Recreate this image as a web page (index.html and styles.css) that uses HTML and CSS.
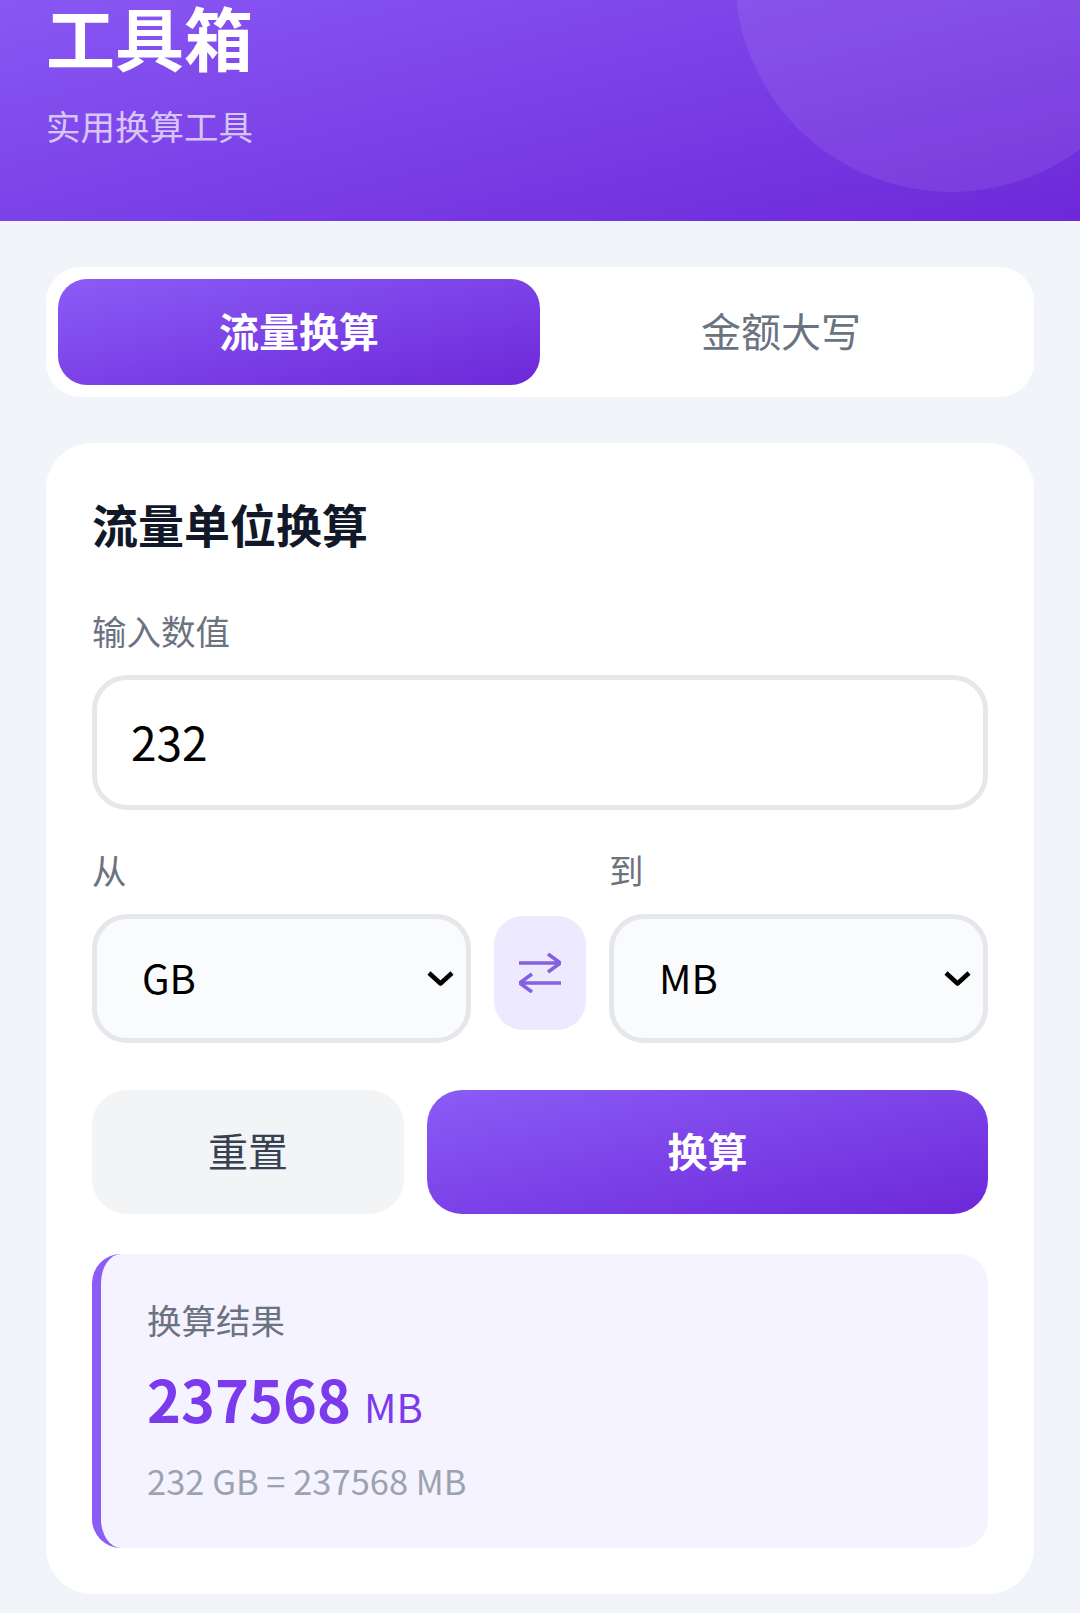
FILE: index.html
```html
<!DOCTYPE html>
<html lang="zh-CN">
<head>
    <meta charset="UTF-8">
    <meta name="viewport" content="width=device-width, initial-scale=1.0">
    <title>工具箱</title>
    <link rel="stylesheet" href="styles.css">
</head>
<body>
    <header class="hero">
        <div class="hero-circle"></div>
        <h1>工具箱</h1>
        <p>实用换算工具</p>
    </header>

    <main>
        <div class="tabs">
            <button class="tab active">流量换算</button>
            <button class="tab">金额大写</button>
        </div>

        <section class="card">
            <h2 class="card-title">流量单位换算</h2>

            <label class="field-label label-value" for="value">输入数值</label>
            <input class="value-input" id="value" type="text" value="232">

            <div class="unit-row">
                <div class="unit-col">
                    <label class="field-label" for="from">从</label>
                    <div class="select-wrap">
                        <select class="unit-select" id="from">
                            <option>GB</option>
                            <option>MB</option>
                        </select>
                        <svg class="chevron" viewBox="0 0 27 15"><path d="M2 2 13.500 12.500 25 2"/></svg>
                    </div>
                </div>
                <button class="swap" aria-label="交换">
                    <svg viewBox="0 0 42 40"><path d="M0 10H41M29 1 41.500 10 29 19M42 30H1M13 21 .5 30 13 39"/></svg>
                </button>
                <div class="unit-col">
                    <label class="field-label" for="to">到</label>
                    <div class="select-wrap">
                        <select class="unit-select" id="to">
                            <option>MB</option>
                            <option>GB</option>
                        </select>
                        <svg class="chevron" viewBox="0 0 27 15"><path d="M2 2 13.500 12.500 25 2"/></svg>
                    </div>
                </div>
            </div>

            <div class="actions">
                <button class="btn btn-reset">重置</button>
                <button class="btn btn-convert">换算</button>
            </div>

            <div class="result">
                <div class="result-label">换算结果</div>
                <div class="result-value">237568 <span class="result-unit">MB</span></div>
                <div class="result-detail">232 GB = 237568 MB</div>
            </div>
        </section>
    </main>
</body>
</html>
```

FILE: styles.css
```css
* {
    box-sizing: border-box;
}
body {
    margin: 0;
    background-color: #f1f5f9;
    font-family: "Noto Sans CJK SC", "Noto Sans", sans-serif;
    line-height: 1.6;
    overflow: hidden;
}
button, input, select {
    font-family: inherit;
}
.hero {
    position: relative;
    overflow: hidden;
    height: 269px;
    margin-top: -48px;
    padding: 38px 46px 0;
    background: linear-gradient(to bottom right, #8b5cf6, #6d28d9);
    color: #fff;
}
.hero-circle {
    position: absolute;
    top: -192px;
    right: -87px;
    width: 432px;
    height: 432px;
    border-radius: 50%;
    background-color: rgba(255, 255, 255, 0.08);
}
.hero h1 {
    margin: 0 0 20px;
    font-size: 69px;
    font-weight: 700;
    line-height: 92px;
}
.hero p {
    margin: 0;
    font-size: 34.5px;
    line-height: 46px;
    color: rgba(255, 255, 255, 0.7);
}
main {
    padding: 46px 46px 0;
}
.tabs {
    display: flex;
    height: 130px;
    padding: 12px;
    margin-bottom: 46px;
    border-radius: 35px;
    background-color: #fff;
}
.tab {
    flex: 1;
    padding: 0 0 4px;
    border: none;
    border-radius: 29px;
    background: none;
    color: #6b7280;
    font-size: 40px;
}
.tab.active {
    background: linear-gradient(to bottom right, #8b5cf6, #6d28d9);
    color: #fff;
    font-weight: 700;
}
.card {
    height: 1151px;
    padding: 43px 46px 0;
    border-radius: 46px;
    background-color: #fff;
}
.card-title {
    margin: 0 0 43px;
    font-size: 46px;
    font-weight: 700;
    line-height: 74px;
    color: #111827;
}
.field-label {
    display: block;
    margin-bottom: 17px;
    font-size: 34.5px;
    line-height: 55px;
    color: #6b7280;
}
.value-input {
    display: block;
    width: 100%;
    height: 135px;
    padding: 0 34px 4px;
    margin-bottom: 32px;
    border: 5px solid #e5e7eb;
    border-radius: 35px;
    background-color: #fff;
    color: #000;
    font-size: 46px;
    outline: none;
}
.unit-row {
    display: flex;
    gap: 23px;
    margin-bottom: 47px;
}
.unit-col {
    flex: 1;
    min-width: 0;
}
.select-wrap {
    position: relative;
}
.unit-select {
    display: block;
    width: 100%;
    height: 129px;
    padding: 0 45px 4px;
    border: 5px solid #e5e7eb;
    border-radius: 35px;
    background-color: #fafbfc;
    color: #000;
    font-size: 40px;
    appearance: none;
    outline: none;
}
.chevron {
    position: absolute;
    top: 57px;
    right: 17px;
    width: 27px;
    height: 15px;
    fill: none;
    stroke: #000;
    stroke-width: 4.5;
    stroke-linejoin: round;
    pointer-events: none;
}
.swap {
    flex: none;
    align-self: flex-end;
    display: flex;
    align-items: center;
    justify-content: center;
    width: 92px;
    height: 114px;
    padding: 0;
    margin-bottom: 13px;
    border: none;
    border-radius: 29px;
    background-color: #ede9fe;
}
.swap svg {
    width: 42px;
    height: 40px;
    fill: none;
    stroke: #8560e0;
    stroke-width: 3.6;
}
.actions {
    display: flex;
    gap: 23px;
    margin-bottom: 40px;
}
.btn {
    height: 124px;
    padding: 0 0 4px;
    border: none;
    border-radius: 35px;
    font-size: 40px;
}
.btn-reset {
    flex: none;
    width: 312px;
    background-color: #f3f4f6;
    color: #374151;
}
.btn-convert {
    flex: 1;
    background: linear-gradient(to bottom right, #8b5cf6, #6d28d9);
    color: #fff;
    font-weight: 700;
}
.result {
    height: 294px;
    padding: 38px 46px 0;
    border-left: 9px solid #8b5cf6;
    border-radius: 29px;
    background-color: #f5f3ff;
}
.result-label {
    font-size: 34.5px;
    line-height: 55px;
    color: #6b7280;
}
.result-value {
    margin: 17px 0 12px;
    font-size: 57.6px;
    font-weight: 700;
    line-height: 69px;
    color: #7c3aed;
}
.result-unit {
    font-size: 40px;
    font-weight: 400;
}
.result-detail {
    font-size: 34.5px;
    line-height: 55px;
    color: #9ca3af;
}
```
